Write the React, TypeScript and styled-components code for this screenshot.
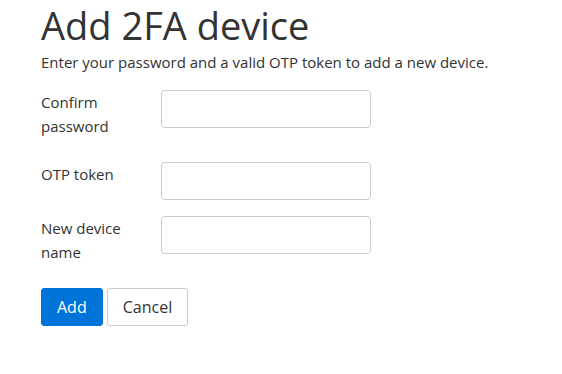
import React from "react";
import styled, { createGlobalStyle } from "styled-components";

const Global = createGlobalStyle`
  html, body { margin: 0; padding: 0; background: #fff; }
  body { font-family: "Open Sans", "Noto Sans", sans-serif; color: #333; }
  * { box-sizing: border-box; }
`;

const Page = styled.div`
  padding: 2px 41px 0;
`;

const Title = styled.h1`
  margin: 0;
  font-size: 38px;
  font-weight: 400;
  line-height: 46px;
  color: #333;
`;

const Lead = styled.p`
  margin: 2px 0 16px;
  font-size: 15px;
  line-height: 24px;
  color: #333;
`;

const Form = styled.form`
  display: grid;
  grid-template-columns: 120px 210px;
  row-gap: 16px;
  align-items: start;
`;

const Label = styled.label`
  font-size: 15px;
  line-height: 24px;
  margin-bottom: 8px;
  padding-right: 16px;
`;

const Input = styled.input`
  height: 38px;
  width: 210px;
  border: 1px solid #ccc;
  border-radius: 4px;
  padding: 6px 12px;
  font: inherit;
`;

const Actions = styled.div`
  display: flex;
  gap: 4px;
  grid-column: 1 / -1;
`;

const Button = styled.button<{ $primary?: boolean }>`
  height: 38px;
  padding: 0 15px;
  border-radius: 3px;
  font-family: inherit;
  font-size: 16px;
  border: 1px solid ${(p) => (p.$primary ? "#0074d9" : "#ccc")};
  background: ${(p) => (p.$primary ? "#0074d9" : "#fff")};
  color: ${(p) => (p.$primary ? "#fff" : "#333")};
`;

export default function App() {
  return (
    <Page>
      <Global />
      <Title>Add 2FA device</Title>
      <Lead>Enter your password and a valid OTP token to add a new device.</Lead>
      <Form onSubmit={(e) => e.preventDefault()}>
        <Label htmlFor="pw">Confirm password</Label>
        <Input id="pw" type="password" />
        <Label htmlFor="otp">OTP token</Label>
        <Input id="otp" type="text" />
        <Label htmlFor="name">New device name</Label>
        <Input id="name" type="text" />
        <Actions>
          <Button $primary type="submit">Add</Button>
          <Button type="button">Cancel</Button>
        </Actions>
      </Form>
    </Page>
  );
}
